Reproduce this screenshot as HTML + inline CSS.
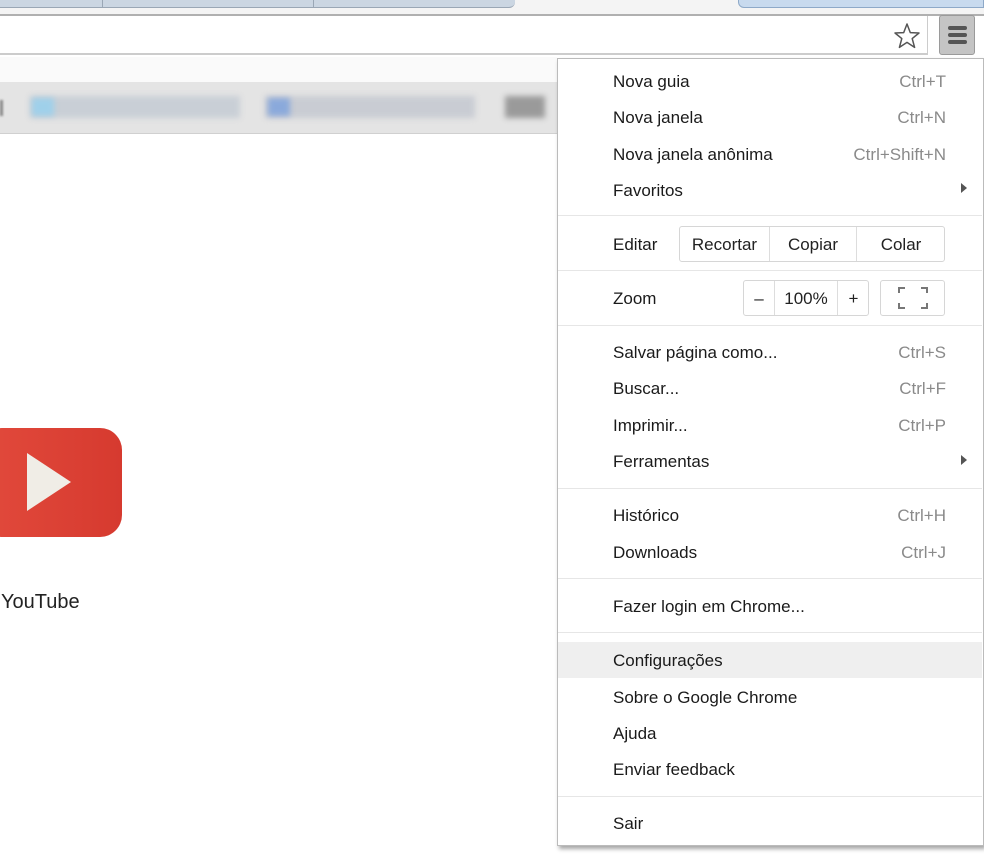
<!DOCTYPE html>
<html><head><meta charset="utf-8"><style>
*{margin:0;padding:0;box-sizing:border-box}
body{width:984px;height:865px;overflow:hidden;background:#fff;font-family:"Liberation Sans",sans-serif;position:relative;color:#222}
.a{position:absolute}
.mi{position:absolute;left:613px;font-size:17px;color:#1a1a1a;line-height:22px}
.sc{position:absolute;right:38px;font-size:17px;color:#8a8a8a;line-height:22px}
.sep{position:absolute;left:558px;width:424px;height:1px;background:#e6e6e6}
.arr{position:absolute;left:961px;width:0;height:0;border-top:5px solid transparent;border-bottom:5px solid transparent;border-left:6px solid #555}
.btn{position:absolute;border:1px solid #d6d6d6;border-radius:3px;background:#fff;font-size:17px;line-height:34px;text-align:center;color:#1a1a1a}
</style></head><body>
<div class="a" style="left:0;top:0;width:984px;height:14px;background:#f4f4f4"></div>
<div class="a" style="left:0;top:0;width:515px;height:8px;background:#cbd6e2;border-bottom:1px solid #9aa7b5;border-radius:0 0 6px 0"></div>
<div class="a" style="left:102px;top:0;width:1px;height:8px;background:#9aa7b5"></div>
<div class="a" style="left:313px;top:0;width:1px;height:8px;background:#9aa7b5"></div>
<div class="a" style="left:738px;top:0;width:246px;height:8px;background:#c8daee;border:1px solid #8ea9c8;border-top:none;border-radius:0 0 0 6px"></div>
<div class="a" style="left:0;top:14px;width:984px;height:2px;background:#b0b0b0"></div>
<div class="a" style="left:0;top:16px;width:928px;height:39px;background:#fff;border-bottom:2px solid #ccc;border-right:1px solid #ccc"></div>
<svg class="a" style="left:891px;top:20px" width="32" height="32" viewBox="0 0 32 32"><path d="M16 4 L19.3 12.6 L28 13 L21.2 18.6 L23.6 27.4 L16 22.4 L8.4 27.4 L10.8 18.6 L4 13 L12.7 12.6 Z" fill="#fff" stroke="#555" stroke-width="1.5" stroke-linejoin="round"/></svg>
<div class="a" style="left:939px;top:15px;width:36px;height:40px;background:#c4c4c4;border:1px solid #9a9a9a;border-radius:3px"></div>
<div class="a" style="left:948px;top:26px;width:19px;height:4px;background:#555;border-radius:2px"></div>
<div class="a" style="left:948px;top:33px;width:19px;height:4px;background:#555;border-radius:2px"></div>
<div class="a" style="left:948px;top:40px;width:19px;height:4px;background:#555;border-radius:2px"></div>
<div class="a" style="left:0;top:57px;width:557px;height:25px;background:#fafafa"></div>
<div class="a" style="left:0;top:82px;width:557px;height:52px;background:#e4e4e4;border-bottom:1px solid #d0d0d0"></div>
<div class="a" style="left:0;top:100px;width:3px;height:16px;background:#888;filter:blur(1px)"></div>
<div class="a" style="left:30px;top:96px;width:210px;height:22px;background:#c9cfd6;filter:blur(3px)"></div>
<div class="a" style="left:32px;top:98px;width:22px;height:18px;background:#9fd0ea;filter:blur(3px)"></div>
<div class="a" style="left:265px;top:96px;width:210px;height:22px;background:#c9ccd3;filter:blur(3px)"></div>
<div class="a" style="left:268px;top:98px;width:22px;height:18px;background:#8aa9db;filter:blur(3px)"></div>
<div class="a" style="left:505px;top:96px;width:40px;height:22px;background:#9a9a9a;filter:blur(3px)"></div>
<div class="a" style="left:-20px;top:428px;width:142px;height:109px;background:linear-gradient(90deg,#e24a3c,#d63a2f);border-radius:22px"></div>
<svg class="a" style="left:24px;top:452px" width="50" height="60"><path d="M3 1 L47 30 L3 59 Z" fill="#f0ede6"/></svg>
<div class="a" style="left:1px;top:591px;font-size:20px;color:#222">YouTube</div>
<div class="a" style="left:557px;top:58px;width:427px;height:788px;background:#fff;border:1px solid #bbb;box-shadow:2px 3px 4px rgba(0,0,0,.35)"></div>
<div class="a" style="left:558px;top:642px;width:424px;height:36px;background:#efefef"></div>
<div class="mi" style="top:71px">Nova guia</div><div class="sc" style="top:71px">Ctrl+T</div>
<div class="mi" style="top:107px">Nova janela</div><div class="sc" style="top:107px">Ctrl+N</div>
<div class="mi" style="top:144px">Nova janela anônima</div><div class="sc" style="top:144px">Ctrl+Shift+N</div>
<div class="mi" style="top:180px">Favoritos</div><div class="arr" style="top:183px"></div>
<div class="sep" style="top:215px"></div>
<div class="mi" style="top:234px">Editar</div>
<div class="btn" style="left:679px;top:226px;width:266px;height:36px"></div>
<div class="a" style="left:769px;top:227px;width:1px;height:34px;background:#ddd"></div>
<div class="a" style="left:856px;top:227px;width:1px;height:34px;background:#ddd"></div>
<div class="a" style="left:680px;top:234px;width:89px;text-align:center;font-size:17px;line-height:22px">Recortar</div>
<div class="a" style="left:770px;top:234px;width:86px;text-align:center;font-size:17px;line-height:22px">Copiar</div>
<div class="a" style="left:857px;top:234px;width:88px;text-align:center;font-size:17px;line-height:22px">Colar</div>
<div class="sep" style="top:270px"></div>
<div class="mi" style="top:288px">Zoom</div>
<div class="btn" style="left:743px;top:280px;width:126px;height:36px"></div>
<div class="a" style="left:774px;top:281px;width:1px;height:34px;background:#ddd"></div>
<div class="a" style="left:837px;top:281px;width:1px;height:34px;background:#ddd"></div>
<div class="a" style="left:744px;top:288px;width:30px;text-align:center;font-size:17px;line-height:22px">–</div>
<div class="a" style="left:775px;top:288px;width:62px;text-align:center;font-size:17px;line-height:22px">100%</div>
<div class="a" style="left:838px;top:288px;width:31px;text-align:center;font-size:17px;line-height:22px">+</div>
<div class="btn" style="left:880px;top:280px;width:65px;height:36px"></div>
<svg class="a" style="left:898px;top:287px" width="30" height="22"><path d="M1 6V1h6M23 1h6v5M29 16v5h-6M7 21H1v-5" fill="none" stroke="#777" stroke-width="2"/></svg>
<div class="sep" style="top:325px"></div>
<div class="mi" style="top:342px">Salvar página como...</div><div class="sc" style="top:342px">Ctrl+S</div>
<div class="mi" style="top:378px">Buscar...</div><div class="sc" style="top:378px">Ctrl+F</div>
<div class="mi" style="top:415px">Imprimir...</div><div class="sc" style="top:415px">Ctrl+P</div>
<div class="mi" style="top:451px">Ferramentas</div><div class="arr" style="top:455px"></div>
<div class="sep" style="top:488px"></div>
<div class="mi" style="top:505px">Histórico</div><div class="sc" style="top:505px">Ctrl+H</div>
<div class="mi" style="top:542px">Downloads</div><div class="sc" style="top:542px">Ctrl+J</div>
<div class="sep" style="top:578px"></div>
<div class="mi" style="top:596px">Fazer login em Chrome...</div>
<div class="sep" style="top:632px"></div>
<div class="mi" style="top:650px">Configurações</div>
<div class="mi" style="top:687px">Sobre o Google Chrome</div>
<div class="mi" style="top:723px">Ajuda</div>
<div class="mi" style="top:759px">Enviar feedback</div>
<div class="sep" style="top:796px"></div>
<div class="mi" style="top:813px">Sair</div>
</body></html>
